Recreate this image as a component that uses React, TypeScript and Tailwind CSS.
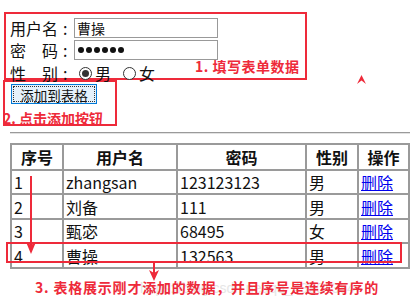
import React from "react";

const rows = [
    {id: 1, name: "zhangsan", pwd: "123123123", sex: "男"},
    {id: 2, name: "刘备", pwd: "111", sex: "男"},
    {id: 3, name: "甄宓", pwd: "68495", sex: "女"},
    {id: 4, name: "曹操", pwd: "132563", sex: "男"},
];

const Radio = ({checked}: {checked?: boolean}) => (
    <span className="w-[13px] h-[13px] rounded-full border border-[#333] bg-white flex items-center justify-center">
        {checked && <span className="w-[7px] h-[7px] rounded-full bg-[#333]"/>}
    </span>
);

const Label = ({text, w}: {text: string, w: string}) => (
    <span className={`flex whitespace-pre ${w}`}>
        <span className="w-[53px]">{text}</span>
        <span>:</span>
    </span>
);

export default function App() {
    const th = "border-2 border-[#9a9a9a] font-bold text-center text-[16px] px-[2px]";
    const td = "border-2 border-[#9a9a9a] text-left text-[16px] px-[2px] leading-[20px]";

    return (
        <div className="relative w-[412px] h-[304px] bg-white overflow-hidden text-[#111] font-['Noto_Sans_CJK_SC','Noto_Sans',sans-serif]">
            {/* 1. form box */}
            <div className="ml-[4px] mt-[12px] w-[303px] h-[68px] border-2 border-[#ee2a3a] flex">
                <div className="pl-[4px] pt-[4px] flex flex-col gap-[2px] text-[16px] leading-[20px]">
                    <div className="flex items-center">
                        <Label text="用户名" w="w-[64px]"/>
                        <input readOnly value="曹操" className="w-[144px] h-[20px] border border-[#999] px-[2px] text-[14px] outline-none"/>
                    </div>
                    <div className="flex items-center">
                        <Label text="密　码" w="w-[64px]"/>
                        <div className="w-[144px] h-[20px] border border-[#999] px-[3px] flex items-center gap-[2px]">
                            {[0, 1, 2, 3, 4, 5].map(i => <span key={i} className="w-[6px] h-[6px] rounded-full bg-[#111]"/>)}
                        </div>
                    </div>
                    <div className="flex items-center mt-[1px]">
                        <Label text="性　别" w="w-[69px]"/>
                        <Radio checked/>
                        <span className="ml-[3px] mr-[12px]">男</span>
                        <Radio/>
                        <span className="ml-[3px]">女</span>
                    </div>
                </div>
                <div className="ml-[-23px] mt-[44px] whitespace-nowrap text-[14px] leading-[16px] font-bold text-[#ee2a3a] tracking-[0.5px]">
                    1. 填写表单数据
                </div>
            </div>

            {/* 2. button box */}
            <div className="ml-[3px] w-[114px] h-[46px] border-2 border-[#ee2a3a]">
                <button className="ml-[6px] w-[86px] h-[20px] bg-[#e5f1fb] border border-[#0078d7] p-[1px] text-[13.5px] leading-none text-[#111]">
                    <span className="block w-full h-full border border-dotted border-[#333] leading-[16px]">添加到表格</span>
                </button>
                <div className="mt-[4px] ml-[-2px] text-[14px] leading-[16px] font-bold text-[#ee2a3a]">2. 点击添加按钮</div>
            </div>

            {/* red caret */}
            <svg className="absolute left-[357px] top-[75px]" width="9" height="9" viewBox="0 0 9 9">
                <path d="M4.5 0 L9 9 L4.5 5.5 L0 9 Z" fill="#ee2a3a"/>
            </svg>

            <div className="mt-[6px] ml-[10px] w-[400px] border-t border-t-[#9a9a9a] border-b border-b-[#e2e2e2]"/>

            {/* table */}
            <table className="ml-[10px] mt-[9px] w-[400px] border-collapse border-2 border-[#9a9a9a]">
                <thead>
                <tr className="h-[25px]">
                    <th className={`${th} w-[52px]`}>序号</th>
                    <th className={`${th} w-[114px]`}>用户名</th>
                    <th className={`${th} w-[129px]`}>密码</th>
                    <th className={`${th} w-[52px]`}>性别</th>
                    <th className={th}>操作</th>
                </tr>
                </thead>
                <tbody>
                {rows.map((r, i) => (
                    <tr key={r.id} className={i % 2 === 0 ? "h-[24px]" : "h-[25px]"}>
                        <td className={td}>{r.id}</td>
                        <td className={td}>{r.name}</td>
                        <td className={td}>{r.pwd}</td>
                        <td className={td}>{r.sex}</td>
                        <td className={td}><a className="text-[#0000ee] underline">删除</a></td>
                    </tr>
                ))}
                </tbody>
            </table>

            {/* annotations over the table */}
            <div className="absolute left-[6px] top-[242px] w-[396px] h-[21px] border-2 border-[#ee2a3a]"/>
            <svg className="absolute left-[26px] top-[176px]" width="10" height="80" viewBox="0 0 10 80">
                <rect x="4" y="0" width="2" height="70" fill="#ee2a3a"/>
                <path d="M0 66 L5 78 L10 66 L5 69 Z" fill="#ee2a3a"/>
            </svg>
            <svg className="absolute left-[149px] top-[263px]" width="10" height="18" viewBox="0 0 10 18">
                <rect x="4" y="0" width="2" height="10" fill="#ee2a3a"/>
                <path d="M0 7 L5 18 L10 7 L5 10 Z" fill="#ee2a3a"/>
            </svg>

            <div className="absolute left-[140px] top-[280px] text-[14px] leading-[16px] text-[#e6e6e6] font-['Liberation_Sans',sans-serif]">
                https://blog.csdn.net/qq_43904384
            </div>
            <div className="relative mt-[10px] ml-[35px] text-[14px] leading-[16px] font-bold text-[#ee2a3a] tracking-[0.8px]">
                3. 表格展示刚才添加的数据，并且序号是连续有序的
            </div>
        </div>
    );
}
